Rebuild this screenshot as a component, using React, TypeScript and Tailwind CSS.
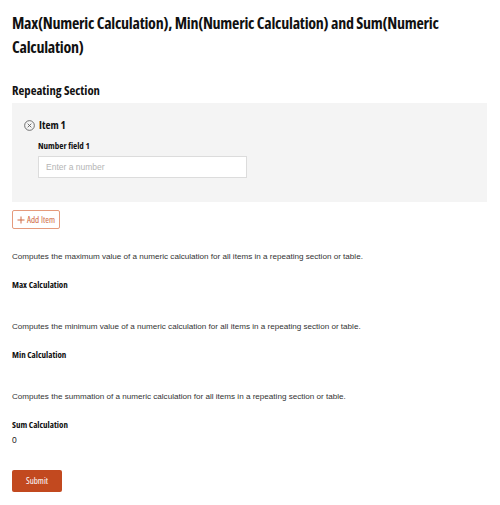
import React from 'react';

const cond = "font-['Open_Sans',sans-serif] [font-stretch:75%]";
const body = "font-['Liberation_Sans',Arial,sans-serif]";

const CalcBlock: React.FC<{ text: string; label: string; value?: string }> = ({ text, label, value }) => (
  <div className="flex flex-col">
    <p className={`${body} text-[8.1px] leading-[12px] text-[#333]`}>{text}</p>
    <div className={`${cond} mt-[16px] text-[9px] leading-[12px] font-bold text-[#111]`}>{label}</div>
    <div className={`${body} mt-[3px] h-[12px] text-[8.5px] leading-[12px] text-[#222]`}>{value}</div>
  </div>
);

const App: React.FC = () => {
  return (
    <div className="min-h-[505px] w-[500px] bg-white px-[12px] pt-[11px]">
      <h1 className={`${cond} text-[16px] leading-[24px] font-bold tracking-[-0.25px] text-[#111]`}>
        Max(Numeric Calculation), Min(Numeric Calculation) and Sum(Numeric Calculation)
      </h1>

      <h2 className={`${cond} mt-[21px] text-[12.7px] leading-[20px] font-bold text-[#111]`}>Repeating Section</h2>

      <div className="mt-[3px] w-[475px] bg-[#f4f4f4] pt-[14px] pb-[24px] pl-[12px]">
        <div className="flex h-[16px] items-center gap-[4px]">
          <svg width="11" height="11" viewBox="0 0 12 12" fill="none" stroke="#555" strokeWidth="0.9">
            <circle cx="6" cy="6" r="5.3" />
            <path d="M4 4l4 4M8 4l-4 4" />
          </svg>
          <span className={`${cond} text-[11px] leading-[16px] font-bold text-[#111]`}>Item 1</span>
        </div>
        <div className="pl-[14px]">
          <div className={`${cond} mt-[7px] text-[9px] leading-[12px] font-bold text-[#111]`}>Number field 1</div>
          <input
            type="text"
            placeholder="Enter a number"
            className={`${body} mt-[4px] block h-[22px] w-[209px] border border-[#dcdcdc] bg-white px-[7px] text-[8.5px] text-[#333] placeholder:text-[#b5b5b5] outline-none`}
          />
        </div>
      </div>

      <button
        className={`${cond} mt-[8px] flex h-[19px] w-[48px] items-center justify-center gap-[2px] rounded-[2px] border border-[#e59a7c] bg-white text-[9px] text-[#d06a44]`}
      >
        <svg width="8" height="8" viewBox="0 0 8 8" stroke="#d06a44" strokeWidth="1">
          <path d="M4 0.5v7M0.5 4h7" />
        </svg>
        Add Item
      </button>

      <div className="mt-[22px] flex flex-col gap-[15px]">
        <CalcBlock
          text="Computes the maximum value of a numeric calculation for all items in a repeating section or table."
          label="Max Calculation"
        />
        <CalcBlock
          text="Computes the minimum value of a numeric calculation for all items in a repeating section or table."
          label="Min Calculation"
        />
        <CalcBlock
          text="Computes the summation of a numeric calculation for all items in a repeating section or table."
          label="Sum Calculation"
          value="0"
        />
      </div>

      <button
        className={`${cond} mt-[24px] h-[22px] w-[50px] rounded-[2px] bg-[#c2491f] text-[9px] text-white`}
      >
        Submit
      </button>
    </div>
  );
};

export default App;
